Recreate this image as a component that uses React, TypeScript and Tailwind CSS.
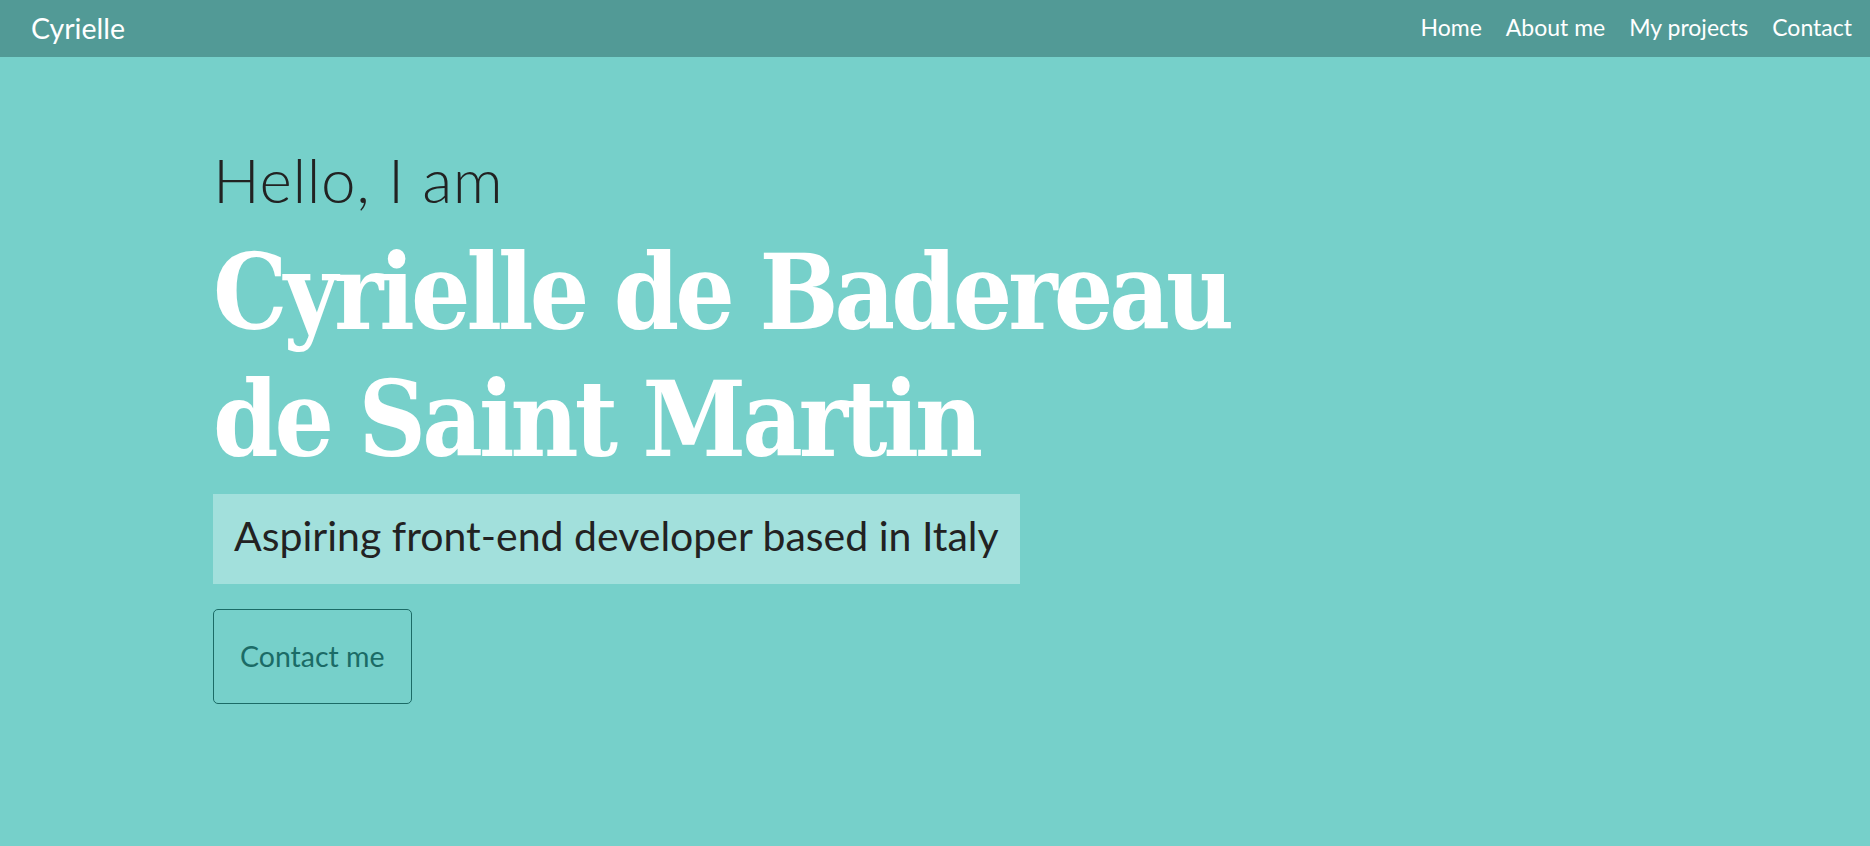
const links = ['Home', 'About me', 'My projects', 'Contact'];

const App = () => {
  return (
    <div className="min-h-[846px] bg-[#76d0ca] font-['Lato','Open_Sans',sans-serif]">
      <nav className="flex h-[57px] items-center justify-between bg-[#529a96] pl-[31px] pr-[18px]">
        <a href="#" className="text-[28.5px] leading-none text-white">Cyrielle</a>
        <ul className="flex items-center gap-[24px]">
          {links.map(link => (
            <li key={link}>
              <a href="#" className="text-[23px] leading-none text-white">{link}</a>
            </li>
          ))}
        </ul>
      </nav>

      <main className="mx-auto max-w-[1444px] pt-[91px]">
        <h2 className="text-[62px] font-light leading-[62px] tracking-[0.01em] text-[#222222]">Hello, I am</h2>
        <h1 className="mt-[19px] whitespace-nowrap font-['DejaVu_Serif',serif] text-[104px] font-bold leading-[127px] tracking-[-0.038em] text-white font-stretch-condensed">
          Cyrielle de Badereau
          <br />
          de Saint Martin
        </h1>
        <p className="mt-[11px] inline-block bg-[#a2e0dc] px-[21px] pt-[19px] pb-[26px] text-[41px] leading-[45px] text-[#222222]">
          Aspiring front-end developer based in Italy
        </p>
        <div>
          <button className="mt-[25px] flex h-[95px] items-center rounded-[5px] border border-[#1b6b66] px-[26px] text-[28.5px] text-[#1b6b66]">
            Contact me
          </button>
        </div>
      </main>
    </div>
  );
};

export default App;
